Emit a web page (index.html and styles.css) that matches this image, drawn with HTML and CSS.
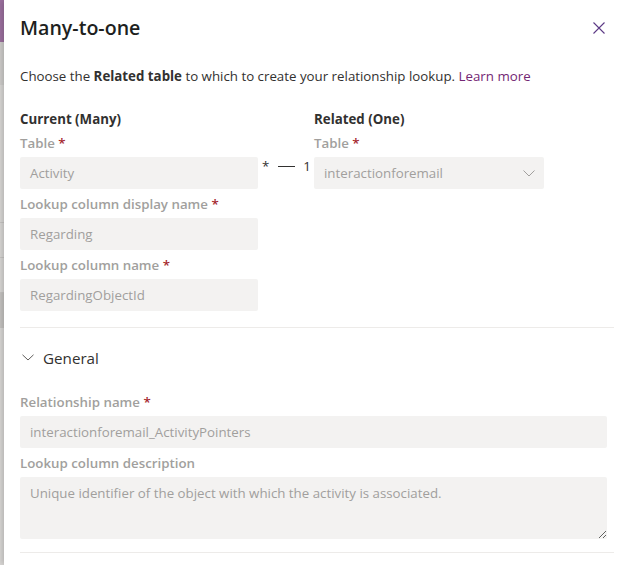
FILE: index.html
```html
<!DOCTYPE html>
<html lang="en">
<head>
<meta charset="utf-8">
<title>Many-to-one</title>
<link rel="stylesheet" href="styles.css">
</head>
<body>
<div class="page">
  <div class="backdrop">
    <div class="bd-header"></div>
    <div class="bd-band"></div>
    <div class="bd-row bd-tall"></div>
    <div class="bd-row"></div>
    <div class="bd-row"></div>
    <div class="bd-dark"></div>
    <div class="bd-rest"></div>
  </div>
  <div class="panel">
    <header class="panel-head">
      <h1 class="title">Many-to-one</h1>
      <button class="close" aria-label="Close">
        <svg width="12" height="12" viewBox="0 0 12 12"><path d="M0.5 0.5 L11.5 11.5 M11.5 0.5 L0.5 11.5" stroke="#5c3a86" stroke-width="1.1" fill="none"/></svg>
      </button>
    </header>
    <p class="intro">Choose the <b>Related table</b> to which to create your relationship lookup. <a class="link" href="#">Learn more</a></p>

    <div class="relation">
      <div class="col col-left">
        <div class="col-title">Current (Many)</div>
        <label class="label">Table <span class="req">*</span></label>
        <div class="input">Activity</div>
        <label class="label">Lookup column display name <span class="req">*</span></label>
        <div class="input">Regarding</div>
        <label class="label">Lookup column name <span class="req">*</span></label>
        <div class="input">RegardingObjectId</div>
      </div>
      <div class="connector"><span>*</span><span class="dash"></span><span>1</span></div>
      <div class="col col-right">
        <div class="col-title">Related (One)</div>
        <label class="label">Table <span class="req">*</span></label>
        <div class="input select">
          <span>interactionforemail</span>
          <svg width="12" height="7" viewBox="0 0 12 7"><path d="M0.5 0.5 L6 6 L11.5 0.5" stroke="#a19f9d" stroke-width="1" fill="none"/></svg>
        </div>
      </div>
    </div>

    <div class="divider"></div>

    <div class="section-head">
      <svg width="12" height="7" viewBox="0 0 12 7"><path d="M0.5 0.8 L6 6 L11.5 0.8" stroke="#605e5c" stroke-width="1" fill="none"/></svg>
      <span>General</span>
    </div>

    <div class="general">
      <label class="label">Relationship name <span class="req">*</span></label>
      <div class="input">interactionforemail_ActivityPointers</div>
      <label class="label">Lookup column description</label>
      <textarea class="textarea" readonly>Unique identifier of the object with which the activity is associated.</textarea>
    </div>

    <div class="divider divider-bottom"></div>
  </div>
</div>
</body>
</html>
```

FILE: styles.css
```css
* { box-sizing: border-box; }
html, body { margin: 0; padding: 0; background: #ffffff; }
body {
  font-family: "Open Sans", "Noto Sans", sans-serif;
  color: #323130;
  width: 620px;
  height: 565px;
  overflow: hidden;
}
.page {
  display: flex;
  height: 565px;
}
.backdrop {
  width: 4px;
  flex: none;
  display: flex;
  flex-direction: column;
  background: #dad8d6;
}
.bd-header { height: 42px; background: #9d71a0; }
.bd-band { height: 43px; background: #d0cecc; }
.bd-row { height: 35px; border-bottom: 1px solid #c8c6c4; }
.bd-tall { height: 138px; }
.bd-dark { height: 35px; margin-top: 0; background: #c6c4c2; }
.bd-rest { flex: 1; }

.panel {
  flex: 1;
  background: #ffffff;
  box-shadow: -2px 0 6px rgba(0, 0, 0, 0.18);
  padding: 14px 6px 0 16px;
  position: relative;
}
.panel-head {
  display: flex;
  align-items: center;
  justify-content: space-between;
  height: 28px;
  padding-right: 9px;
}
.title {
  margin: 0;
  font-size: 19.6px;
  font-weight: 600;
  line-height: 26px;
  color: #201f1e;
}
.close {
  border: 0;
  background: none;
  padding: 0;
  width: 12px;
  height: 12px;
  display: flex;
}
.intro {
  margin: 24px 0 0;
  font-size: 13.3px;
  line-height: 20px;
  color: #323130;
}
.intro b { font-weight: 700; }
.link { color: #742774; text-decoration: none; }

.relation {
  display: flex;
  margin-top: 23px;
}
.col { display: flex; flex-direction: column; }
.col-left { width: 238px; }
.col-right { width: 230px; }
.col-title {
  font-size: 13.3px;
  font-weight: 700;
  line-height: 20px;
  height: 19px;
  color: #323130;
}
.label {
  display: block;
  font-size: 13.3px;
  font-weight: 600;
  line-height: 20px;
  padding: 5px 0 4px;
  color: #a19f9d;
}
.req { color: #a4262c; }
.input {
  height: 32px;
  background: #f3f2f1;
  border-radius: 2px;
  font-size: 13.3px;
  line-height: 32px;
  padding: 0 10px;
  color: #a19f9d;
}
.select {
  display: flex;
  align-items: center;
  justify-content: space-between;
  padding-right: 9px;
}
.connector {
  width: 56px;
  flex: none;
  display: flex;
  align-items: center;
  height: 20px;
  margin-top: 47px;
  padding-left: 4px;
  font-size: 13.3px;
  color: #323130;
}
.dash {
  width: 17px;
  height: 1px;
  background: #323130;
  margin: 0 8px 0 9px;
}

.divider {
  height: 1px;
  background: #edebe9;
  margin-top: 16px;
}
.section-head {
  height: 59px;
  display: flex;
  align-items: center;
  gap: 9px;
  padding-left: 2px;
  font-size: 15.2px;
  color: #323130;
}
.general {
  display: flex;
  flex-direction: column;
  padding-right: 7px;
}
.textarea {
  height: 62px;
  background: #f3f2f1;
  border: 0;
  border-radius: 2px;
  font-family: inherit;
  font-size: 13.3px;
  line-height: 20px;
  padding: 6px 10px;
  color: #a19f9d;
  resize: vertical;
  outline: none;
}
.divider-bottom { margin-top: 13px; }
```
